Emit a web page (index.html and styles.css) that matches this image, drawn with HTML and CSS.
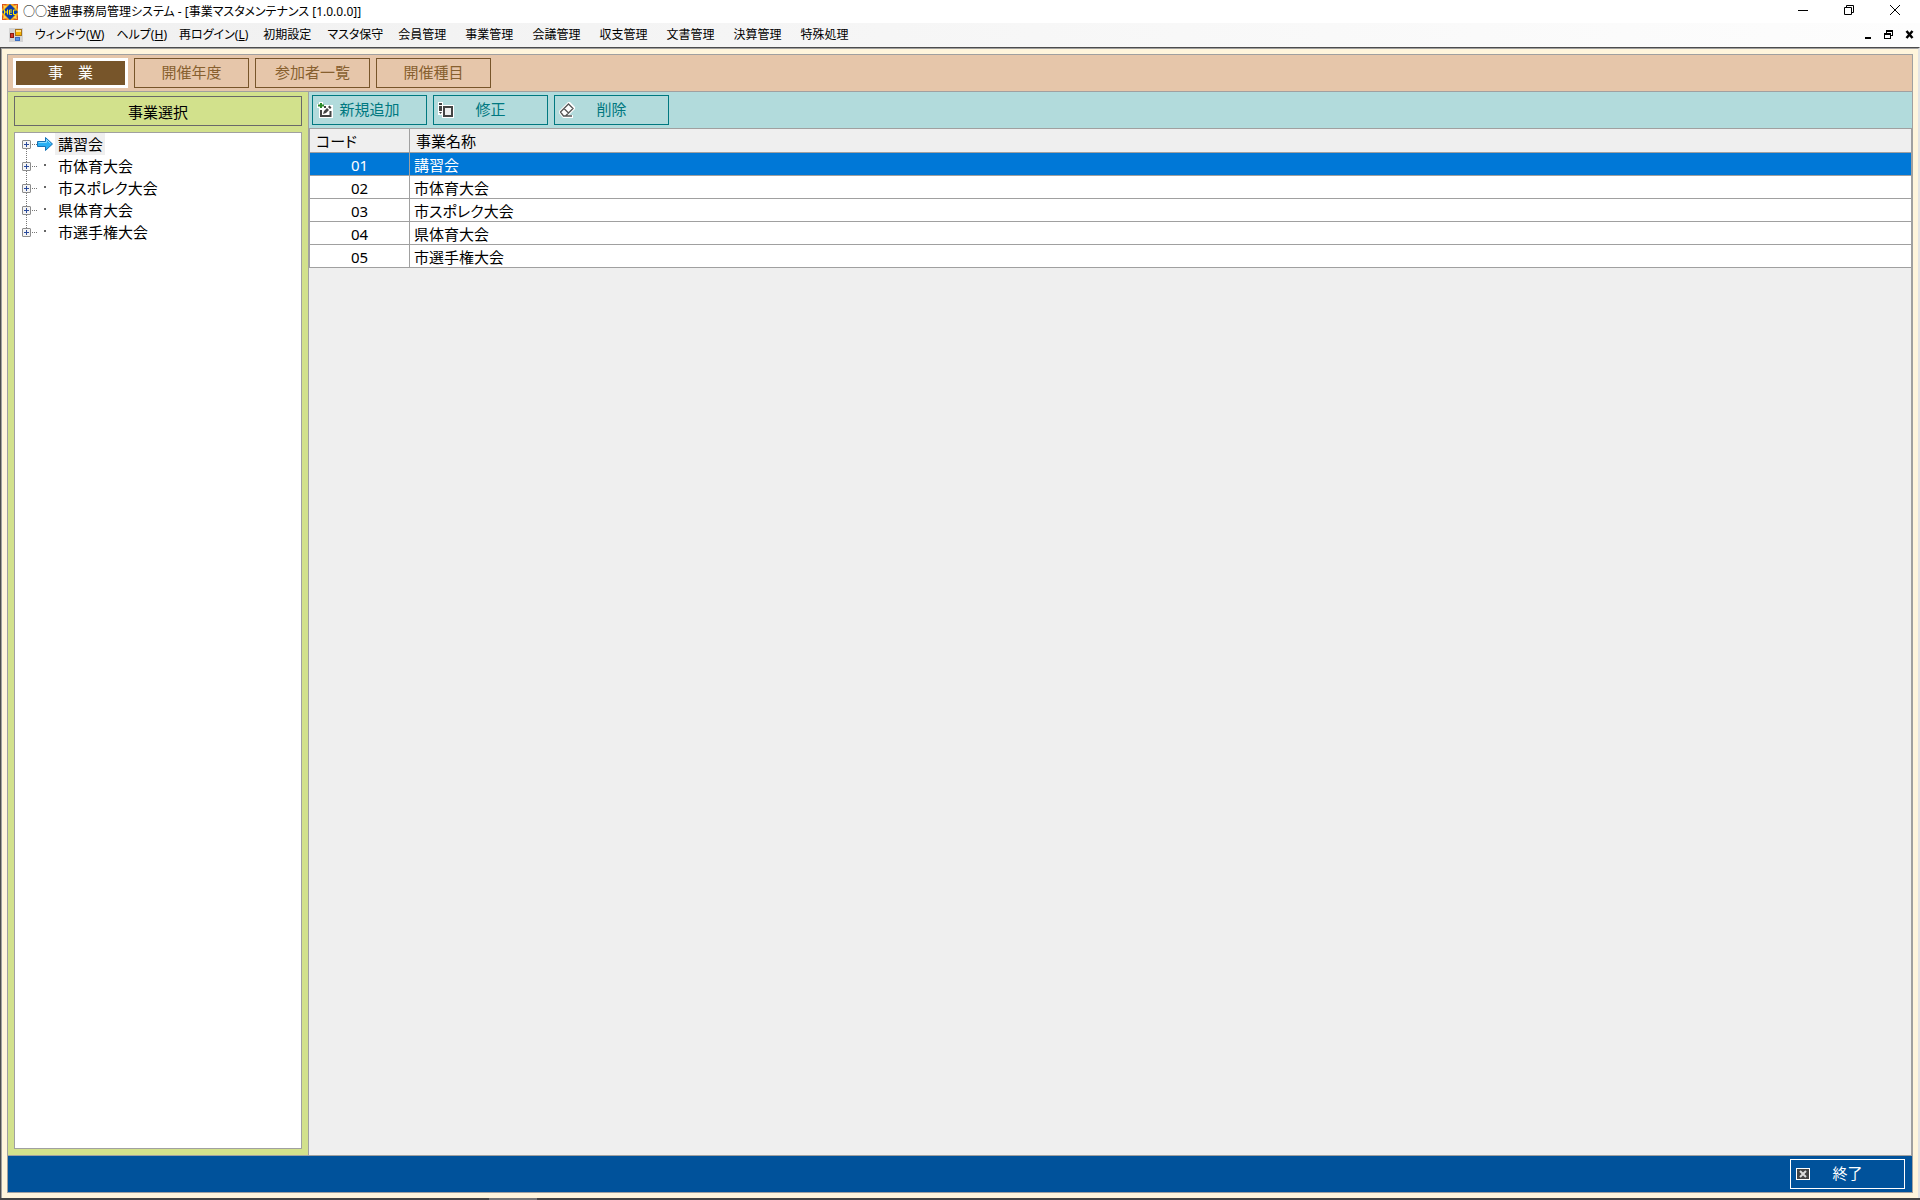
FILE: index.html
```html
<!DOCTYPE html>
<html lang="ja">
<head>
    <meta charset="UTF-8">
    <meta name="viewport" content="width=device-width, initial-scale=1.0">
    <title>○○連盟事務局管理システム - [事業マスタメンテナンス [1.0.0.0]]</title>
    <link rel="stylesheet" href="styles.css">
</head>
<body>
    <header class="title-bar">
        <svg class="app-icon" width="16" height="16" viewBox="0 0 16 16" aria-hidden="true">
            <rect width="16" height="16" fill="#f5a51c"/>
            <path d="M0 0h5L0 5zM11 0h5v5zM0 11v5h5zM16 11v5h-5z" fill="#d9541e"/>
            <path d="M1 1l4 1-3 3zM15 1l-4 1 3 3zM1 15l4-1-3-3zM15 15l-4-1 3-3z" fill="#ffd84a"/>
            <path d="M8 0l8 8-8 8-8-8z" fill="#0a3fae"/>
            <path d="M2.500 5.500v5M5.500 5.500v5M2.500 8h3M10 6H7.500v4.500H10M7.500 8H10M14 6h-2.500v4.500H14" fill="none" stroke="#ffe400"/>
        </svg>
        <h1 class="window-title">○○連盟事務局管理システム - [事業マスタメンテナンス [1.0.0.0]]</h1>
        <div class="window-controls">
            <button class="window-btn" aria-label="最小化">
                <svg width="10" height="10" viewBox="0 0 10 10"><path d="M0 5.500h10" stroke="#000"/></svg>
            </button>
            <button class="window-btn" aria-label="元に戻す">
                <svg width="10" height="10" viewBox="0 0 10 10"><path d="M.5 2.500h7v7h-7zM2.500 2.500v-2h7v7h-2" fill="none" stroke="#000"/></svg>
            </button>
            <button class="window-btn" aria-label="閉じる">
                <svg width="10" height="10" viewBox="0 0 10 10"><path d="M0 0l10 10M10 0L0 10" stroke="#000"/></svg>
            </button>
        </div>
    </header>

    <nav class="menu-bar">
        <svg class="form-icon" width="14" height="14" viewBox="0 0 14 14" aria-hidden="true">
            <rect width="14" height="14" fill="#d4d4d4"/>
            <rect x="6.500" y="1.500" width="6" height="6" fill="#f5b400" stroke="#a8741a"/>
            <rect x="7" y="2" width="5" height="2" fill="#ffe08a"/>
            <rect x="1.500" y="5.500" width="3" height="4" fill="#d8392b" stroke="#8c1d12"/>
            <rect x="6.500" y="9.500" width="4" height="3" fill="#5b93e6" stroke="#3c6fc4"/>
        </svg>
        <button class="menu-item kana">ウィンドウ(<u>W</u>)</button>
        <button class="menu-item kana">ヘルプ(<u>H</u>)</button>
        <button class="menu-item kana">再ログイン(<u>L</u>)</button>
        <button class="menu-item">初期設定</button>
        <button class="menu-item kana">マスタ保守</button>
        <button class="menu-item">会員管理</button>
        <button class="menu-item">事業管理</button>
        <button class="menu-item">会議管理</button>
        <button class="menu-item">収支管理</button>
        <button class="menu-item">文書管理</button>
        <button class="menu-item">決算管理</button>
        <button class="menu-item">特殊処理</button>
        <div class="mdi-controls">
            <button class="mdi-btn" aria-label="子ウィンドウを最小化">
                <svg width="10" height="10" viewBox="0 0 10 10"><path d="M2 7h6v2H2z"/></svg>
            </button>
            <button class="mdi-btn" aria-label="子ウィンドウを元に戻す">
                <svg width="10" height="10" viewBox="0 0 10 10"><path d="M2 0h7v6H7V5h1V2H3v1H2zM0 3h7v6H0zM1 5v3h5V5z" fill-rule="evenodd"/></svg>
            </button>
            <button class="mdi-btn" aria-label="子ウィンドウを閉じる">
                <svg width="10" height="10" viewBox="0 0 10 10"><path d="M1.500 1l6 7M7.500 1l-6 7" stroke="#000" stroke-width="2.500"/></svg>
            </button>
        </div>
    </nav>

    <div class="workspace">
        <div class="form">
            <div class="tabs">
                <button class="btn tab active">事&emsp;業</button>
                <button class="btn tab">開催年度</button>
                <button class="btn tab">参加者一覧</button>
                <button class="btn tab">開催種目</button>
            </div>

            <div class="content">
                <aside class="side">
                    <h2 class="side-title">事業選択</h2>
                    <ul class="tree">
                        <li class="node selected">
                            <button class="expander" aria-label="展開"></button>
                            <svg class="node-icon" width="16" height="16" viewBox="0 0 16 16" aria-hidden="true">
                                <path d="M.5 5.500h8v-4l7 6.500-7 6.500v-4h-8z" fill="#27aef2" stroke="#1670b5"/>
                                <path d="M1.500 6.500h8v-3l4 4" fill="none" stroke="#8bdcff"/>
                            </svg>
                            <span class="node-text">講習会</span>
                        </li>
                        <li class="node">
                            <button class="expander" aria-label="展開"></button>
                            <svg class="node-icon" width="16" height="16" viewBox="0 0 16 16" aria-hidden="true"><path d="M7 6h2v2H7z" fill="#666"/></svg>
                            <span class="node-text">市体育大会</span>
                        </li>
                        <li class="node">
                            <button class="expander" aria-label="展開"></button>
                            <svg class="node-icon" width="16" height="16" viewBox="0 0 16 16" aria-hidden="true"><path d="M7 6h2v2H7z" fill="#666"/></svg>
                            <span class="node-text">市スポレク大会</span>
                        </li>
                        <li class="node">
                            <button class="expander" aria-label="展開"></button>
                            <svg class="node-icon" width="16" height="16" viewBox="0 0 16 16" aria-hidden="true"><path d="M7 6h2v2H7z" fill="#666"/></svg>
                            <span class="node-text">県体育大会</span>
                        </li>
                        <li class="node">
                            <button class="expander" aria-label="展開"></button>
                            <svg class="node-icon" width="16" height="16" viewBox="0 0 16 16" aria-hidden="true"><path d="M7 6h2v2H7z" fill="#666"/></svg>
                            <span class="node-text">市選手権大会</span>
                        </li>
                    </ul>
                </aside>

                <main class="main">
                    <div class="toolbar">
                        <button class="btn tool">
                            <svg width="16" height="16" viewBox="0 0 16 16" aria-hidden="true">
                                <path d="M2 0h4v3h10v13H2V6H0V2h2z" fill="#fff"/>
                                <path d="M9 5H7M4 8v6h9.500V9" fill="none" stroke="#444" stroke-width="2"/>
                                <path d="M6 12l1-3 3-3 2 2-3 3zM11 5l1.500-1.500 2 2L13 7z" fill="#444"/>
                                <path d="M4 1v5M1 3.500h6" stroke="#2c8a2c" stroke-width="2"/>
                            </svg>
                            <span>新規追加</span>
                        </button>
                        <button class="btn tool">
                            <svg width="16" height="16" viewBox="0 0 16 16" aria-hidden="true">
                                <path d="M0 0h5v3h11v13H4v-3H0z" fill="#fff"/>
                                <path d="M1 1h3v2H1zM1 4h3v5H1zM1 10h3l-1.500 2z" fill="#444"/>
                                <rect x="6" y="5" width="8" height="9" fill="#eee" stroke="#444" stroke-width="2"/>
                            </svg>
                            <span>修正</span>
                        </button>
                        <button class="btn tool">
                            <svg width="16" height="16" viewBox="0 0 16 16" aria-hidden="true">
                                <path d="M9 0h2l5 5v2l-6 6h4v3H4L0 11V9z" fill="#fff"/>
                                <path d="M1.500 10L9.500 2 14 6.500 6.500 14h-2zM5 6.500L9.500 11M5 14h8" fill="none" stroke="#555" stroke-width="1.300"/>
                            </svg>
                            <span>削除</span>
                        </button>
                    </div>

                    <div class="grid-area">
                        <table class="grid">
                            <thead>
                                <tr><th class="code">コード</th><th>事業名称</th></tr>
                            </thead>
                            <tbody>
                                <tr class="selected"><td class="code">01</td><td>講習会</td></tr>
                                <tr><td class="code">02</td><td>市体育大会</td></tr>
                                <tr><td class="code">03</td><td>市スポレク大会</td></tr>
                                <tr><td class="code">04</td><td>県体育大会</td></tr>
                                <tr><td class="code">05</td><td>市選手権大会</td></tr>
                            </tbody>
                        </table>
                    </div>
                </main>
            </div>

            <footer class="footer">
                <button class="btn tool exit">
                    <svg width="16" height="16" viewBox="0 0 16 16" aria-hidden="true">
                        <rect x="1.500" y="2.500" width="13" height="11" fill="#444" stroke="#fff"/>
                        <path d="M5 5l6 6M11 5l-6 6" stroke="#ddd" stroke-width="2"/>
                    </svg>
                    <span>終了</span>
                </button>
            </footer>
        </div>
    </div>
    <div class="taskbar-edge"></div>
</body>
</html>
```
FILE: styles.css
```css
* {
    margin: 0;
    padding: 0;
    box-sizing: border-box;
}

body {
    display: flex;
    flex-direction: column;
    height: 100vh;
    font-family: "Noto Sans", "Noto Sans CJK JP", sans-serif;
    font-size: 15px;
    line-height: 22px;
    font-feature-settings: "palt";
    color: #000;
    background: #fff;
}

button {
    font: inherit;
    font-feature-settings: inherit;
    color: inherit;
    background: none;
    border: none;
}

svg {
    display: block;
}

/* title bar */
.title-bar {
    display: flex;
    align-items: center;
    height: 23px;
    padding: 0 2px;
    background: #fff;
}

.window-title {
    margin-left: 5px;
    font-size: 12px;
    font-weight: normal;
}

.window-controls {
    display: flex;
    align-self: stretch;
    margin-left: auto;
    padding-bottom: 3px;
}

.window-btn {
    display: flex;
    align-items: center;
    justify-content: center;
    width: 46px;
}

/* menu */
.menu-bar {
    display: flex;
    align-items: center;
    height: 24px;
    padding-left: 9px;
    background: linear-gradient(to right, #f0f0f0, #fdfdfd);
}

.form-icon {
    margin-right: 6px;
}

.menu-item {
    padding: 0 10px 0 9px;
    font-size: 12px;
}

.menu-item.kana {
    padding: 0 6px;
}

.mdi-controls {
    display: flex;
    margin-left: auto;
    padding-right: 5px;
    gap: 11px;
}

.mdi-btn {
    width: 10px;
}

/* workspace frame */
.workspace {
    flex: 1;
    display: flex;
    min-height: 0;
    padding: 5px;
    background: #fff5dc;
    border-top: 2px groove #a0a0a0;
    border-left: 2px groove #a0a0a0;
    border-right: 2px solid #e3e3e3;
}

.form {
    flex: 1;
    display: flex;
    flex-direction: column;
    border: 1px solid #a0a0a0;
}

.btn {
    width: 115px;
    height: 30px;
    padding-bottom: 2px;
    border: 1px solid;
    white-space: nowrap;
}

.tabs {
    display: flex;
    gap: 6px;
    padding: 3px 5px;
    background: #e6c6aa;
    border-bottom: 1px solid #a0a0a0;
}

.tab {
    color: #87602f;
    border-color: #77552a;
}

.tab.active {
    color: #fff;
    background: #77552a;
    border: 3px solid #fff;
}

.content {
    flex: 1;
    display: flex;
    min-height: 0;
}

/* tree */
.side {
    display: flex;
    flex-direction: column;
    gap: 6px;
    width: 301px;
    padding: 4px 6px 6px;
    background: #d2e18c;
    border-right: 1px solid #a0a0a0;
}

.side-title {
    height: 30px;
    font-size: 15px;
    font-weight: normal;
    line-height: 30px;
    text-align: center;
    border: 1px solid #696969;
}

.tree {
    flex: 1;
    list-style: none;
    background: #fff;
    border: 1px solid #a0a0a0;
}

.node {
    display: flex;
    align-items: center;
    height: 22px;
    padding-left: 7px;
}

.expander {
    position: relative;
    width: 9px;
    height: 9px;
    border: 1px solid #8c8c8c;
    border-radius: 1px;
    background:
        linear-gradient(#2b4a9b, #2b4a9b) center / 5px 1px no-repeat,
        linear-gradient(#2b4a9b, #2b4a9b) center / 1px 5px no-repeat,
        #f4f4f4;
}

/* dotted connectors between the nodes */
.expander::before {
    content: "";
    position: absolute;
    top: 3px;
    left: 9px;
    width: 5px;
    border-top: 1px dotted #777;
}

.node:not(:last-child) .expander::after {
    content: "";
    position: absolute;
    top: 8px;
    left: 3px;
    height: 13px;
    border-left: 1px dotted #777;
}

.node-icon {
    margin: 0 2px 0 6px;
}

.node-text {
    padding: 0 2px 0 3px;
}

.node.selected .node-text {
    background: #efefef;
}

/* right side */
.main {
    flex: 1;
    display: flex;
    flex-direction: column;
    min-width: 0;
}

.toolbar {
    display: flex;
    gap: 6px;
    padding: 3px;
    background: #b2dbdc;
    border-bottom: 1px solid #a0a0a0;
}

.tool {
    display: grid;
    grid-template-columns: 1fr auto 1fr;
    align-items: center;
    padding: 0 4px 2px;
    color: #007880;
}

.tool svg {
    margin-top: 2px;
}

.grid-area {
    flex: 1;
    background: #efefef;
    border-right: 1px solid #a0a0a0;
}

.grid {
    width: 100%;
    border-collapse: separate;
    border-spacing: 0;
    border-left: 1px solid #a0a0a0;
    table-layout: fixed;
}

.grid th,
.grid td {
    height: 23px;
    padding: 2px 4px 0;
    font-weight: normal;
    line-height: 20px;
    text-align: left;
    white-space: nowrap;
    background: #fff;
    border-bottom: 1px solid #a0a0a0;
}

.grid th {
    height: 24px;
    padding: 0 6px;
    background: #efefef;
}

.grid .code {
    width: 100px;
    border-right: 1px solid #a0a0a0;
}

.grid td.code {
    text-align: center;
}

.grid .selected td {
    color: #fff;
    background: #0078d7;
}

.footer {
    display: flex;
    justify-content: flex-end;
    padding: 3px 7px;
    background: #00529b;
    border-top: 1px solid #a0a0a0;
}

.exit {
    color: #fff;
}

/* sliver of the taskbar, with its active button */
.taskbar-edge {
    height: 2px;
    background: linear-gradient(#777, #777) 489px 0 / 48px 2px no-repeat, #444;
}
```
